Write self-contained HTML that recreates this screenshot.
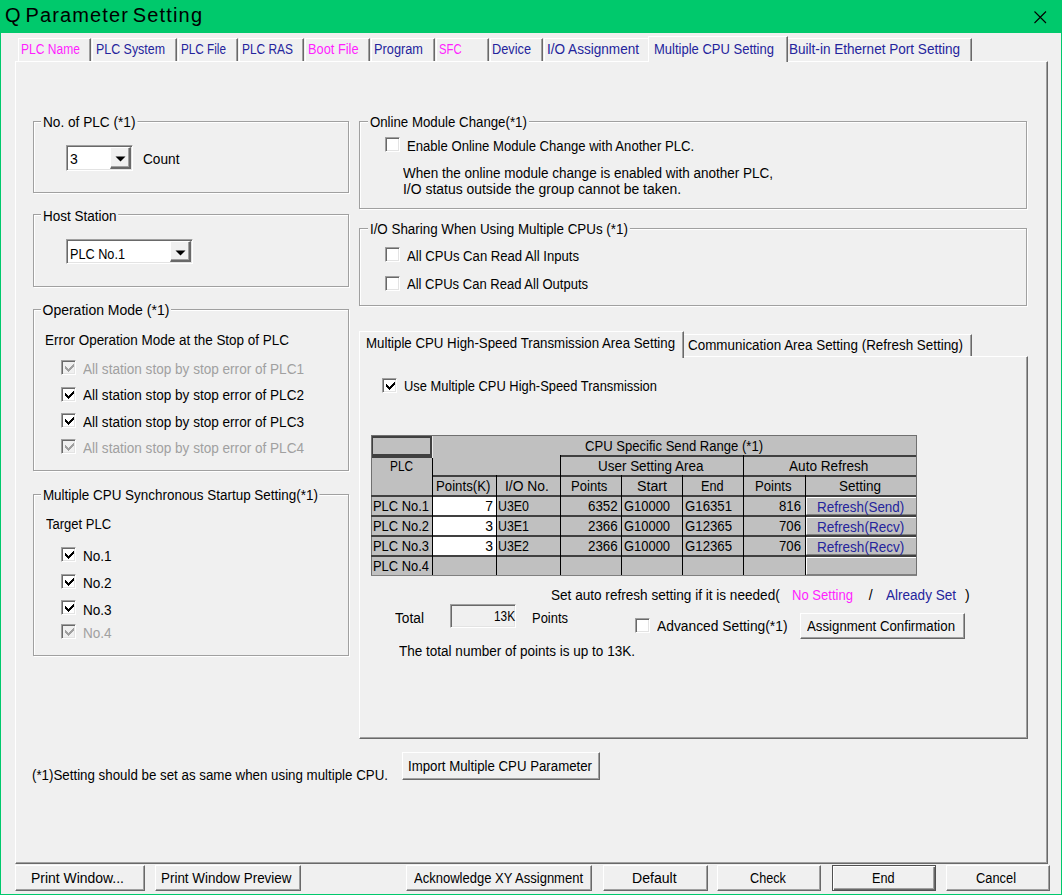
<!DOCTYPE html>
<html><head><meta charset="utf-8">
<style>
*{margin:0;padding:0;box-sizing:border-box}
html,body{width:1062px;height:895px;overflow:hidden;background:#f0f0f0}
body{position:relative;font-family:"Liberation Sans",sans-serif;font-size:14px;color:#000}
.a{position:absolute;white-space:nowrap;line-height:16px}
.r{position:absolute}
</style></head><body>
<div class="r" style="left:0px;top:0px;width:1062px;height:33px;background:#00c96c"></div>
<div class="a" style="left:5px;top:3px;font-size:20px;line-height:24px;letter-spacing:1.15px;word-spacing:-3px">Q Parameter Setting</div>
<svg class="a" style="left:1034px;top:11px" width="13" height="13"><path d="M0.5 0.5L12 12M12 0.5L0.5 12" stroke="#000" stroke-width="1.1"/></svg>
<div class="r" style="left:0px;top:33px;width:1px;height:862px;background:#00c96c"></div>
<div class="r" style="left:1061px;top:33px;width:1px;height:862px;background:#00c96c"></div>
<div class="r" style="left:0px;top:894px;width:1062px;height:1px;background:#00c96c"></div>
<div class="r" style="left:18px;top:38px;width:73px;height:23px;border-top:1px solid #fff;border-left:1px solid #fff;border-right:1px solid #696969;box-shadow:inset -1px 0 0 #a0a0a0"></div>
<div class="a" style="left:21.00px;top:41px;font-size:14px;transform:scaleX(0.8613);transform-origin:0 0;color:#ff1eff;">PLC Name</div>
<div class="r" style="left:92px;top:38px;width:85px;height:23px;border-top:1px solid #fff;border-left:1px solid #fff;border-right:1px solid #696969;box-shadow:inset -1px 0 0 #a0a0a0"></div>
<div class="a" style="left:96.00px;top:41px;font-size:14px;transform:scaleX(0.8869);transform-origin:0 0;color:#24249c;">PLC System</div>
<div class="r" style="left:178px;top:38px;width:60px;height:23px;border-top:1px solid #fff;border-left:1px solid #fff;border-right:1px solid #696969;box-shadow:inset -1px 0 0 #a0a0a0"></div>
<div class="a" style="left:180.50px;top:41px;font-size:14px;transform:scaleX(0.8380);transform-origin:0 0;color:#24249c;">PLC File</div>
<div class="r" style="left:239px;top:38px;width:65px;height:23px;border-top:1px solid #fff;border-left:1px solid #fff;border-right:1px solid #696969;box-shadow:inset -1px 0 0 #a0a0a0"></div>
<div class="a" style="left:241.60px;top:41px;font-size:14px;transform:scaleX(0.8514);transform-origin:0 0;color:#24249c;">PLC RAS</div>
<div class="r" style="left:305px;top:38px;width:65px;height:23px;border-top:1px solid #fff;border-left:1px solid #fff;border-right:1px solid #696969;box-shadow:inset -1px 0 0 #a0a0a0"></div>
<div class="a" style="left:307.50px;top:41px;font-size:14px;transform:scaleX(0.9149);transform-origin:0 0;color:#ff1eff;">Boot File</div>
<div class="r" style="left:371px;top:38px;width:64px;height:23px;border-top:1px solid #fff;border-left:1px solid #fff;border-right:1px solid #696969;box-shadow:inset -1px 0 0 #a0a0a0"></div>
<div class="a" style="left:374.20px;top:41px;font-size:14px;transform:scaleX(0.9125);transform-origin:0 0;color:#24249c;">Program</div>
<div class="r" style="left:436px;top:38px;width:53px;height:23px;border-top:1px solid #fff;border-left:1px solid #fff;border-right:1px solid #696969;box-shadow:inset -1px 0 0 #a0a0a0"></div>
<div class="a" style="left:439.40px;top:41px;font-size:14px;transform:scaleX(0.8071);transform-origin:0 0;color:#ff1eff;">SFC</div>
<div class="r" style="left:490px;top:38px;width:53px;height:23px;border-top:1px solid #fff;border-left:1px solid #fff;border-right:1px solid #696969;box-shadow:inset -1px 0 0 #a0a0a0"></div>
<div class="a" style="left:492.00px;top:41px;font-size:14px;transform:scaleX(0.9112);transform-origin:0 0;color:#24249c;">Device</div>
<div class="r" style="left:544px;top:38px;width:106px;height:23px;border-top:1px solid #fff;border-left:1px solid #fff;border-right:1px solid #696969;box-shadow:inset -1px 0 0 #a0a0a0"></div>
<div class="a" style="left:546.70px;top:41px;font-size:14px;transform:scaleX(0.9694);transform-origin:0 0;color:#24249c;">I/O Assignment</div>
<div class="r" style="left:787px;top:38px;width:185px;height:23px;border-top:1px solid #fff;border-left:1px solid #fff;border-right:1px solid #696969;box-shadow:inset -1px 0 0 #a0a0a0"></div>
<div class="a" style="left:789.00px;top:41px;font-size:14px;transform:scaleX(0.9683);transform-origin:0 0;color:#24249c;">Built-in Ethernet Port Setting</div>
<div class="r" style="left:15px;top:61px;width:1033px;height:803px;border-style:solid;border-width:1px;border-color:#fff #696969 #696969 #fff;box-shadow:inset -1px -1px 0 #a0a0a0"></div>
<div class="r" style="left:648px;top:36px;width:140px;height:26px;background:#f0f0f0;border-top:1px solid #fff;border-left:1px solid #fff;border-right:1px solid #696969;box-shadow:inset -1px 0 0 #a0a0a0"></div>
<div class="a" style="left:654.00px;top:41px;font-size:14px;transform:scaleX(0.9288);transform-origin:0 0;color:#24249c;">Multiple CPU Setting</div>
<div class="r" style="left:33px;top:121px;width:316px;height:72px;border:1px solid #a0a0a0;box-shadow:inset 1px 1px 0 #fff,1px 1px 0 #fff"></div>
<div class="a" style="left:42.50px;top:114px;font-size:14px;transform:scaleX(0.9747);transform-origin:0 0;background:#f0f0f0;padding:0 2px;margin-left:-2px">No. of PLC (*1)</div>
<div class="r" style="left:66px;top:145px;width:67px;height:26px;background:#fff;border-style:solid;border-width:1px;border-color:#a0a0a0 #fff #fff #a0a0a0;box-shadow:inset 1px 1px 0 #696969,inset -1px -1px 0 #e3e3e3"></div>
<div class="r" style="left:110px;top:147px;width:21px;height:22px;background:#f0f0f0;border-style:solid;border-width:1px 2px 2px 1px;border-color:#fff #696969 #696969 #fff;box-shadow:inset -1px -1px 0 #a0a0a0"></div>
<svg class="a" style="left:115px;top:156px" width="11" height="6"><path d="M0.5 0.5H10.5L5.5 5.5Z" fill="#000"/></svg>
<div class="a" style="left:70.00px;top:151px;font-size:14px;">3</div>
<div class="a" style="left:143.00px;top:151px;font-size:14px;transform:scaleX(0.9759);transform-origin:0 0;">Count</div>
<div class="r" style="left:33px;top:214px;width:316px;height:73px;border:1px solid #a0a0a0;box-shadow:inset 1px 1px 0 #fff,1px 1px 0 #fff"></div>
<div class="a" style="left:42.50px;top:208px;font-size:14px;transform:scaleX(0.9646);transform-origin:0 0;background:#f0f0f0;padding:0 2px;margin-left:-2px">Host Station</div>
<div class="r" style="left:66px;top:239px;width:127px;height:25px;background:#fff;border-style:solid;border-width:1px;border-color:#a0a0a0 #fff #fff #a0a0a0;box-shadow:inset 1px 1px 0 #696969,inset -1px -1px 0 #e3e3e3"></div>
<div class="r" style="left:170px;top:241px;width:21px;height:21px;background:#f0f0f0;border-style:solid;border-width:1px 2px 2px 1px;border-color:#fff #696969 #696969 #fff;box-shadow:inset -1px -1px 0 #a0a0a0"></div>
<svg class="a" style="left:175px;top:250px" width="11" height="6"><path d="M0.5 0.5H10.5L5.5 5.5Z" fill="#000"/></svg>
<div class="a" style="left:70.30px;top:246px;font-size:14px;transform:scaleX(0.9061);transform-origin:0 0;">PLC No.1</div>
<div class="r" style="left:33px;top:309px;width:316px;height:162px;border:1px solid #a0a0a0;box-shadow:inset 1px 1px 0 #fff,1px 1px 0 #fff"></div>
<div class="a" style="left:42.50px;top:302px;font-size:14px;background:#f0f0f0;padding:0 2px;margin-left:-2px">Operation Mode (*1)</div>
<div class="a" style="left:45.00px;top:332px;font-size:14px;transform:scaleX(0.9618);transform-origin:0 0;">Error Operation Mode at the Stop of PLC</div>
<div class="r" style="left:61px;top:360px;width:15px;height:15px;background:#f0f0f0;border-style:solid;border-width:1px;border-color:#a0a0a0 #fff #fff #a0a0a0;box-shadow:inset 1px 1px 0 #696969,inset -1px -1px 0 #e3e3e3"></div>
<svg class="a" style="left:61px;top:360px" width="15" height="15"><path d="M4 6h1v3h-1zM5 7h1v3h-1zM6 8h1v3h-1zM7 9h1v3h-1zM8 8h1v3h-1zM9 7h1v3h-1zM10 6h1v3h-1zM11 5h1v3h-1zM12 4h1v3h-1z" fill="#a0a0a0"/></svg>
<div class="a" style="left:83.00px;top:361px;font-size:14px;transform:scaleX(0.9693);transform-origin:0 0;color:#a0a0a0;">All station stop by stop error of PLC1</div>
<div class="r" style="left:61px;top:387px;width:15px;height:15px;background:#fff;border-style:solid;border-width:1px;border-color:#a0a0a0 #fff #fff #a0a0a0;box-shadow:inset 1px 1px 0 #696969,inset -1px -1px 0 #e3e3e3"></div>
<svg class="a" style="left:61px;top:387px" width="15" height="15"><path d="M4 6h1v3h-1zM5 7h1v3h-1zM6 8h1v3h-1zM7 9h1v3h-1zM8 8h1v3h-1zM9 7h1v3h-1zM10 6h1v3h-1zM11 5h1v3h-1zM12 4h1v3h-1z" fill="#000"/></svg>
<div class="a" style="left:83.00px;top:387px;font-size:14px;transform:scaleX(0.9693);transform-origin:0 0;">All station stop by stop error of PLC2</div>
<div class="r" style="left:61px;top:413px;width:15px;height:15px;background:#fff;border-style:solid;border-width:1px;border-color:#a0a0a0 #fff #fff #a0a0a0;box-shadow:inset 1px 1px 0 #696969,inset -1px -1px 0 #e3e3e3"></div>
<svg class="a" style="left:61px;top:413px" width="15" height="15"><path d="M4 6h1v3h-1zM5 7h1v3h-1zM6 8h1v3h-1zM7 9h1v3h-1zM8 8h1v3h-1zM9 7h1v3h-1zM10 6h1v3h-1zM11 5h1v3h-1zM12 4h1v3h-1z" fill="#000"/></svg>
<div class="a" style="left:83.00px;top:414px;font-size:14px;transform:scaleX(0.9693);transform-origin:0 0;">All station stop by stop error of PLC3</div>
<div class="r" style="left:61px;top:439px;width:15px;height:15px;background:#f0f0f0;border-style:solid;border-width:1px;border-color:#a0a0a0 #fff #fff #a0a0a0;box-shadow:inset 1px 1px 0 #696969,inset -1px -1px 0 #e3e3e3"></div>
<svg class="a" style="left:61px;top:439px" width="15" height="15"><path d="M4 6h1v3h-1zM5 7h1v3h-1zM6 8h1v3h-1zM7 9h1v3h-1zM8 8h1v3h-1zM9 7h1v3h-1zM10 6h1v3h-1zM11 5h1v3h-1zM12 4h1v3h-1z" fill="#a0a0a0"/></svg>
<div class="a" style="left:83.00px;top:440px;font-size:14px;transform:scaleX(0.9693);transform-origin:0 0;color:#a0a0a0;">All station stop by stop error of PLC4</div>
<div class="r" style="left:33px;top:494px;width:316px;height:162px;border:1px solid #a0a0a0;box-shadow:inset 1px 1px 0 #fff,1px 1px 0 #fff"></div>
<div class="a" style="left:42.50px;top:487px;font-size:14px;transform:scaleX(0.9602);transform-origin:0 0;background:#f0f0f0;padding:0 2px;margin-left:-2px">Multiple CPU Synchronous Startup Setting(*1)</div>
<div class="a" style="left:46.00px;top:516px;font-size:14px;transform:scaleX(0.9286);transform-origin:0 0;">Target PLC</div>
<div class="r" style="left:61px;top:547px;width:15px;height:15px;background:#fff;border-style:solid;border-width:1px;border-color:#a0a0a0 #fff #fff #a0a0a0;box-shadow:inset 1px 1px 0 #696969,inset -1px -1px 0 #e3e3e3"></div>
<svg class="a" style="left:61px;top:547px" width="15" height="15"><path d="M4 6h1v3h-1zM5 7h1v3h-1zM6 8h1v3h-1zM7 9h1v3h-1zM8 8h1v3h-1zM9 7h1v3h-1zM10 6h1v3h-1zM11 5h1v3h-1zM12 4h1v3h-1z" fill="#000"/></svg>
<div class="a" style="left:83.00px;top:548px;font-size:14px;transform:scaleX(0.9696);transform-origin:0 0;">No.1</div>
<div class="r" style="left:61px;top:574px;width:15px;height:15px;background:#fff;border-style:solid;border-width:1px;border-color:#a0a0a0 #fff #fff #a0a0a0;box-shadow:inset 1px 1px 0 #696969,inset -1px -1px 0 #e3e3e3"></div>
<svg class="a" style="left:61px;top:574px" width="15" height="15"><path d="M4 6h1v3h-1zM5 7h1v3h-1zM6 8h1v3h-1zM7 9h1v3h-1zM8 8h1v3h-1zM9 7h1v3h-1zM10 6h1v3h-1zM11 5h1v3h-1zM12 4h1v3h-1z" fill="#000"/></svg>
<div class="a" style="left:83.00px;top:575px;font-size:14px;transform:scaleX(0.9696);transform-origin:0 0;">No.2</div>
<div class="r" style="left:61px;top:600px;width:15px;height:15px;background:#fff;border-style:solid;border-width:1px;border-color:#a0a0a0 #fff #fff #a0a0a0;box-shadow:inset 1px 1px 0 #696969,inset -1px -1px 0 #e3e3e3"></div>
<svg class="a" style="left:61px;top:600px" width="15" height="15"><path d="M4 6h1v3h-1zM5 7h1v3h-1zM6 8h1v3h-1zM7 9h1v3h-1zM8 8h1v3h-1zM9 7h1v3h-1zM10 6h1v3h-1zM11 5h1v3h-1zM12 4h1v3h-1z" fill="#000"/></svg>
<div class="a" style="left:83.00px;top:602px;font-size:14px;transform:scaleX(0.9696);transform-origin:0 0;">No.3</div>
<div class="r" style="left:61px;top:624px;width:15px;height:15px;background:#f0f0f0;border-style:solid;border-width:1px;border-color:#a0a0a0 #fff #fff #a0a0a0;box-shadow:inset 1px 1px 0 #696969,inset -1px -1px 0 #e3e3e3"></div>
<svg class="a" style="left:61px;top:624px" width="15" height="15"><path d="M4 6h1v3h-1zM5 7h1v3h-1zM6 8h1v3h-1zM7 9h1v3h-1zM8 8h1v3h-1zM9 7h1v3h-1zM10 6h1v3h-1zM11 5h1v3h-1zM12 4h1v3h-1z" fill="#a0a0a0"/></svg>
<div class="a" style="left:83.00px;top:625px;font-size:14px;transform:scaleX(0.9696);transform-origin:0 0;color:#a0a0a0;">No.4</div>
<div class="r" style="left:359px;top:121px;width:668px;height:88px;border:1px solid #a0a0a0;box-shadow:inset 1px 1px 0 #fff,1px 1px 0 #fff"></div>
<div class="a" style="left:369.50px;top:114px;font-size:14px;transform:scaleX(0.9469);transform-origin:0 0;background:#f0f0f0;padding:0 2px;margin-left:-2px">Online Module Change(*1)</div>
<div class="r" style="left:385px;top:137px;width:15px;height:15px;background:#fff;border-style:solid;border-width:1px;border-color:#a0a0a0 #fff #fff #a0a0a0;box-shadow:inset 1px 1px 0 #696969,inset -1px -1px 0 #e3e3e3"></div>
<div class="a" style="left:407.00px;top:138px;font-size:14px;transform:scaleX(0.9361);transform-origin:0 0;">Enable Online Module Change with Another PLC.</div>
<div class="a" style="left:403.30px;top:165px;font-size:14px;transform:scaleX(0.9643);transform-origin:0 0;">When the online module change is enabled with another PLC,</div>
<div class="a" style="left:403.30px;top:181px;font-size:14px;transform:scaleX(0.9950);transform-origin:0 0;">I/O status outside the group cannot be taken.</div>
<div class="r" style="left:359px;top:228px;width:668px;height:78px;border:1px solid #a0a0a0;box-shadow:inset 1px 1px 0 #fff,1px 1px 0 #fff"></div>
<div class="a" style="left:369.50px;top:221px;font-size:14px;transform:scaleX(0.9556);transform-origin:0 0;background:#f0f0f0;padding:0 2px;margin-left:-2px">I/O Sharing When Using Multiple CPUs (*1)</div>
<div class="r" style="left:385px;top:247px;width:15px;height:15px;background:#fff;border-style:solid;border-width:1px;border-color:#a0a0a0 #fff #fff #a0a0a0;box-shadow:inset 1px 1px 0 #696969,inset -1px -1px 0 #e3e3e3"></div>
<div class="a" style="left:407.00px;top:248px;font-size:14px;transform:scaleX(0.9368);transform-origin:0 0;">All CPUs Can Read All Inputs</div>
<div class="r" style="left:385px;top:276px;width:15px;height:15px;background:#fff;border-style:solid;border-width:1px;border-color:#a0a0a0 #fff #fff #a0a0a0;box-shadow:inset 1px 1px 0 #696969,inset -1px -1px 0 #e3e3e3"></div>
<div class="a" style="left:407.00px;top:276px;font-size:14px;transform:scaleX(0.9306);transform-origin:0 0;">All CPUs Can Read All Outputs</div>
<div class="r" style="left:683px;top:334px;width:289px;height:23px;border-top:1px solid #fff;border-right:1px solid #696969;box-shadow:inset -1px 0 0 #a0a0a0"></div>
<div class="a" style="left:688.00px;top:337px;font-size:14px;transform:scaleX(0.9579);transform-origin:0 0;">Communication Area Setting (Refresh Setting)</div>
<div class="r" style="left:359px;top:356px;width:669px;height:383px;border-style:solid;border-width:1px;border-color:#fff #696969 #696969 #fff;box-shadow:inset -1px -1px 0 #a0a0a0"></div>
<div class="r" style="left:359px;top:331px;width:325px;height:27px;background:#f0f0f0;border-top:1px solid #fff;border-left:1px solid #fff;border-right:1px solid #696969;box-shadow:inset -1px 0 0 #a0a0a0"></div>
<div class="a" style="left:366.00px;top:335px;font-size:14px;transform:scaleX(0.9479);transform-origin:0 0;">Multiple CPU High-Speed Transmission Area Setting</div>
<div class="r" style="left:382px;top:378px;width:15px;height:15px;background:#fff;border-style:solid;border-width:1px;border-color:#a0a0a0 #fff #fff #a0a0a0;box-shadow:inset 1px 1px 0 #696969,inset -1px -1px 0 #e3e3e3"></div>
<svg class="a" style="left:382px;top:378px" width="15" height="15"><path d="M4 6h1v3h-1zM5 7h1v3h-1zM6 8h1v3h-1zM7 9h1v3h-1zM8 8h1v3h-1zM9 7h1v3h-1zM10 6h1v3h-1zM11 5h1v3h-1zM12 4h1v3h-1z" fill="#000"/></svg>
<div class="a" style="left:404.00px;top:378px;font-size:14px;transform:scaleX(0.9210);transform-origin:0 0;">Use Multiple CPU High-Speed Transmission</div>
<div class="r" style="left:371px;top:435px;width:546px;height:141px;background:#c0c0c0"></div>
<div class="r" style="left:433px;top:497px;width:63px;height:18px;background:#fff"></div>
<div class="r" style="left:433px;top:517px;width:63px;height:18px;background:#fff"></div>
<div class="r" style="left:433px;top:537px;width:63px;height:18px;background:#fff"></div>
<div class="r" style="left:806px;top:497px;width:110px;height:18px;border-top:1px solid #fff;border-left:1px solid #fff;border-bottom:1px solid #808080"></div>
<div class="r" style="left:806px;top:517px;width:110px;height:18px;border-top:1px solid #fff;border-left:1px solid #fff;border-bottom:1px solid #808080"></div>
<div class="r" style="left:806px;top:537px;width:110px;height:18px;border-top:1px solid #fff;border-left:1px solid #fff;border-bottom:1px solid #808080"></div>
<div class="r" style="left:806px;top:557px;width:110px;height:18px;border-top:1px solid #fff;border-left:1px solid #fff;border-bottom:1px solid #808080"></div>
<div class="r" style="left:371px;top:436px;width:61px;height:22px;border:2px solid #404040;border-bottom-width:4px"></div>
<div class="r" style="left:432px;top:436px;width:1px;height:22px;background:#e8e8e8"></div>
<div class="r" style="left:371px;top:435px;width:546px;height:1px;background:#707070"></div>
<div class="r" style="left:371px;top:435px;width:1px;height:141px;background:#707070"></div>
<div class="r" style="left:916px;top:435px;width:1px;height:141px;background:#707070"></div>
<div class="r" style="left:371px;top:575px;width:546px;height:1px;background:#808080"></div>
<div class="r" style="left:560px;top:455px;width:356px;height:2px;background:#404040"></div>
<div class="r" style="left:432px;top:475px;width:484px;height:2px;background:#404040"></div>
<div class="r" style="left:371px;top:495px;width:545px;height:2px;background:#404040"></div>
<div class="r" style="left:371px;top:515px;width:545px;height:2px;background:#404040"></div>
<div class="r" style="left:371px;top:535px;width:545px;height:2px;background:#404040"></div>
<div class="r" style="left:371px;top:555px;width:545px;height:2px;background:#404040"></div>
<div class="r" style="left:432px;top:458px;width:1px;height:117px;background:#000"></div>
<div class="r" style="left:560px;top:455px;width:1px;height:120px;background:#000"></div>
<div class="r" style="left:743px;top:455px;width:1px;height:120px;background:#000"></div>
<div class="r" style="left:496px;top:475px;width:1px;height:100px;background:#000"></div>
<div class="r" style="left:621px;top:475px;width:1px;height:100px;background:#000"></div>
<div class="r" style="left:682px;top:475px;width:1px;height:100px;background:#000"></div>
<div class="r" style="left:805px;top:475px;width:1px;height:100px;background:#000"></div>
<div class="a" style="left:584.50px;top:438px;font-size:14px;transform:scaleX(0.9339);transform-origin:0 0;">CPU Specific Send Range (*1)</div>
<div class="a" style="left:389.80px;top:458px;font-size:14px;transform:scaleX(0.8456);transform-origin:0 0;">PLC</div>
<div class="a" style="left:597.70px;top:458px;font-size:14px;transform:scaleX(0.9608);transform-origin:0 0;">User Setting Area</div>
<div class="a" style="left:789.30px;top:458px;font-size:14px;transform:scaleX(0.9718);transform-origin:0 0;">Auto Refresh</div>
<div class="a" style="left:435.90px;top:478px;font-size:14px;transform:scaleX(0.9444);transform-origin:0 0;">Points(K)</div>
<div class="a" style="left:505.40px;top:478px;font-size:14px;transform:scaleX(0.9887);transform-origin:0 0;">I/O No.</div>
<div class="a" style="left:570.60px;top:478px;font-size:14px;transform:scaleX(0.9357);transform-origin:0 0;">Points</div>
<div class="a" style="left:636.60px;top:478px;font-size:14px;transform:scaleX(1.0135);transform-origin:0 0;">Start</div>
<div class="a" style="left:701.40px;top:478px;font-size:14px;transform:scaleX(0.9076);transform-origin:0 0;">End</div>
<div class="a" style="left:754.80px;top:478px;font-size:14px;transform:scaleX(0.9409);transform-origin:0 0;">Points</div>
<div class="a" style="left:838.90px;top:478px;font-size:14px;transform:scaleX(0.9633);transform-origin:0 0;">Setting</div>
<div class="a" style="left:373.40px;top:498px;font-size:14px;transform:scaleX(0.9226);transform-origin:0 0;">PLC No.1</div>
<div class="a" style="left:485.20px;top:498px;font-size:14px;">7</div>
<div class="a" style="left:498.30px;top:498px;font-size:14px;transform:scaleX(0.8857);transform-origin:0 0;">U3E0</div>
<div class="a" style="left:588.30px;top:498px;font-size:14px;transform:scaleX(0.9550);transform-origin:0 0;">6352</div>
<div class="a" style="left:624.00px;top:498px;font-size:14px;transform:scaleX(0.9237);transform-origin:0 0;">G10000</div>
<div class="a" style="left:684.80px;top:498px;font-size:14px;transform:scaleX(0.9438);transform-origin:0 0;">G16351</div>
<div class="a" style="left:779.00px;top:498px;font-size:14px;transform:scaleX(0.9402);transform-origin:0 0;">816</div>
<div class="a" style="left:816.50px;top:499px;font-size:14px;transform:scaleX(0.9582);transform-origin:0 0;color:#24249c;">Refresh(Send)</div>
<div class="a" style="left:373.40px;top:518px;font-size:14px;transform:scaleX(0.9226);transform-origin:0 0;">PLC No.2</div>
<div class="a" style="left:485.20px;top:518px;font-size:14px;">3</div>
<div class="a" style="left:498.30px;top:518px;font-size:14px;transform:scaleX(0.8857);transform-origin:0 0;">U3E1</div>
<div class="a" style="left:588.30px;top:518px;font-size:14px;transform:scaleX(0.9550);transform-origin:0 0;">2366</div>
<div class="a" style="left:624.00px;top:518px;font-size:14px;transform:scaleX(0.9237);transform-origin:0 0;">G10000</div>
<div class="a" style="left:684.80px;top:518px;font-size:14px;transform:scaleX(0.9438);transform-origin:0 0;">G12365</div>
<div class="a" style="left:779.00px;top:518px;font-size:14px;transform:scaleX(0.9402);transform-origin:0 0;">706</div>
<div class="a" style="left:816.50px;top:519px;font-size:14px;transform:scaleX(0.9667);transform-origin:0 0;color:#24249c;">Refresh(Recv)</div>
<div class="a" style="left:373.40px;top:538px;font-size:14px;transform:scaleX(0.9226);transform-origin:0 0;">PLC No.3</div>
<div class="a" style="left:485.20px;top:538px;font-size:14px;">3</div>
<div class="a" style="left:498.30px;top:538px;font-size:14px;transform:scaleX(0.8857);transform-origin:0 0;">U3E2</div>
<div class="a" style="left:588.30px;top:538px;font-size:14px;transform:scaleX(0.9550);transform-origin:0 0;">2366</div>
<div class="a" style="left:624.00px;top:538px;font-size:14px;transform:scaleX(0.9237);transform-origin:0 0;">G10000</div>
<div class="a" style="left:684.80px;top:538px;font-size:14px;transform:scaleX(0.9438);transform-origin:0 0;">G12365</div>
<div class="a" style="left:779.00px;top:538px;font-size:14px;transform:scaleX(0.9402);transform-origin:0 0;">706</div>
<div class="a" style="left:816.50px;top:539px;font-size:14px;transform:scaleX(0.9667);transform-origin:0 0;color:#24249c;">Refresh(Recv)</div>
<div class="a" style="left:373.40px;top:558px;font-size:14px;transform:scaleX(0.9226);transform-origin:0 0;">PLC No.4</div>
<div class="a" style="left:550.80px;top:587px;font-size:14px;transform:scaleX(0.9699);transform-origin:0 0;">Set auto refresh setting if it is needed(</div>
<div class="a" style="left:792.00px;top:587px;font-size:14px;transform:scaleX(0.9327);transform-origin:0 0;color:#ff1eff;">No Setting</div>
<div class="a" style="left:868.80px;top:587px;font-size:14px;">/</div>
<div class="a" style="left:885.80px;top:587px;font-size:14px;transform:scaleX(0.9669);transform-origin:0 0;color:#24249c;">Already Set</div>
<div class="a" style="left:964.90px;top:587px;font-size:14px;">)</div>
<div class="a" style="left:394.50px;top:610px;font-size:14px;transform:scaleX(0.9797);transform-origin:0 0;">Total</div>
<div class="r" style="left:450px;top:604px;width:66px;height:24px;background:#f0f0f0;border-style:solid;border-width:1px;border-color:#a0a0a0 #fff #fff #a0a0a0;box-shadow:inset 1px 1px 0 #696969,inset -1px -1px 0 #e3e3e3"></div>
<div class="a" style="left:493.50px;top:608px;font-size:14px;transform:scaleX(0.8434);transform-origin:0 0;">13K</div>
<div class="a" style="left:531.60px;top:610px;font-size:14px;transform:scaleX(0.9254);transform-origin:0 0;">Points</div>
<div class="r" style="left:635px;top:618px;width:15px;height:15px;background:#fff;border-style:solid;border-width:1px;border-color:#a0a0a0 #fff #fff #a0a0a0;box-shadow:inset 1px 1px 0 #696969,inset -1px -1px 0 #e3e3e3"></div>
<div class="a" style="left:657.00px;top:618px;font-size:14px;transform:scaleX(0.9864);transform-origin:0 0;">Advanced Setting(*1)</div>
<div class="r" style="left:800px;top:613px;width:165px;height:26px;background:#f0f0f0;border-style:solid;border-width:1px;border-color:#fff #696969 #696969 #fff;box-shadow:inset -1px -1px 0 #a0a0a0"></div>
<div class="a" style="left:806.70px;top:618px;font-size:14px;transform:scaleX(0.9463);transform-origin:0 0;">Assignment Confirmation</div>
<div class="a" style="left:398.50px;top:643px;font-size:14px;transform:scaleX(0.9656);transform-origin:0 0;">The total number of points is up to 13K.</div>
<div class="a" style="left:31.80px;top:767px;font-size:14px;transform:scaleX(0.9511);transform-origin:0 0;">(*1)Setting should be set as same when using multiple CPU.</div>
<div class="r" style="left:402px;top:752px;width:198px;height:28px;background:#f0f0f0;border-style:solid;border-width:1px;border-color:#fff #696969 #696969 #fff;box-shadow:inset -1px -1px 0 #a0a0a0"></div>
<div class="a" style="left:407.60px;top:758px;font-size:14px;transform:scaleX(0.9460);transform-origin:0 0;">Import Multiple CPU Parameter</div>
<div class="r" style="left:15px;top:865px;width:130px;height:26px;background:#f0f0f0;border-style:solid;border-width:1px;border-color:#fff #696969 #696969 #fff;box-shadow:inset -1px -1px 0 #a0a0a0"></div>
<div class="a" style="left:31.00px;top:870px;font-size:14px;transform:scaleX(0.9957);transform-origin:0 0;">Print Window...</div>
<div class="r" style="left:155px;top:865px;width:146px;height:26px;background:#f0f0f0;border-style:solid;border-width:1px;border-color:#fff #696969 #696969 #fff;box-shadow:inset -1px -1px 0 #a0a0a0"></div>
<div class="a" style="left:161.20px;top:870px;font-size:14px;transform:scaleX(0.9581);transform-origin:0 0;">Print Window Preview</div>
<div class="r" style="left:406px;top:865px;width:186px;height:26px;background:#f0f0f0;border-style:solid;border-width:1px;border-color:#fff #696969 #696969 #fff;box-shadow:inset -1px -1px 0 #a0a0a0"></div>
<div class="a" style="left:413.60px;top:870px;font-size:14px;transform:scaleX(0.9296);transform-origin:0 0;">Acknowledge XY Assignment</div>
<div class="r" style="left:603px;top:865px;width:105px;height:26px;background:#f0f0f0;border-style:solid;border-width:1px;border-color:#fff #696969 #696969 #fff;box-shadow:inset -1px -1px 0 #a0a0a0"></div>
<div class="a" style="left:632.00px;top:870px;font-size:14px;transform:scaleX(1.0045);transform-origin:0 0;">Default</div>
<div class="r" style="left:717px;top:865px;width:104px;height:26px;background:#f0f0f0;border-style:solid;border-width:1px;border-color:#fff #696969 #696969 #fff;box-shadow:inset -1px -1px 0 #a0a0a0"></div>
<div class="a" style="left:750.40px;top:870px;font-size:14px;transform:scaleX(0.9045);transform-origin:0 0;">Check</div>
<div class="r" style="left:832px;top:865px;width:104px;height:26px;background:#f0f0f0;border:1px solid #505050;box-shadow:inset 1px 1px 0 #fff,inset -1px -1px 0 #696969,inset -2px -2px 0 #a0a0a0"></div>
<div class="a" style="left:871.60px;top:870px;font-size:14px;transform:scaleX(0.9076);transform-origin:0 0;">End</div>
<div class="r" style="left:946px;top:865px;width:104px;height:26px;background:#f0f0f0;border-style:solid;border-width:1px;border-color:#fff #696969 #696969 #fff;box-shadow:inset -1px -1px 0 #a0a0a0"></div>
<div class="a" style="left:976.40px;top:870px;font-size:14px;transform:scaleX(0.9174);transform-origin:0 0;">Cancel</div>
</body></html>
